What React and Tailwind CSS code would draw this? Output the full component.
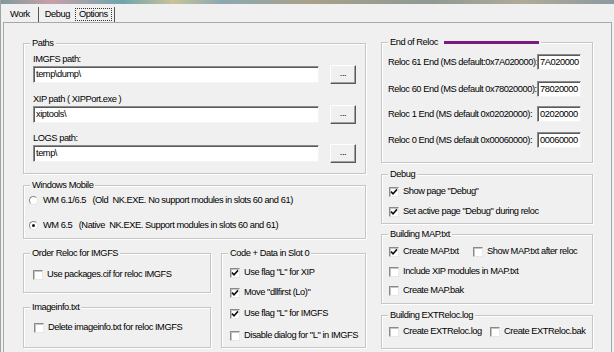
import React from "react";

const Check = ({ checked }) => (
  <span className="flex h-[10px] w-[10px] shrink-0 items-center justify-center border border-t-[#8a8a8a] border-l-[#8a8a8a] border-r-[#e8e8e8] border-b-[#e8e8e8] bg-white shadow-[inset_1px_1px_0_#c4c4c4]">
    {checked && (
      <svg width="8" height="8" viewBox="0 0 8 8">
        <path d="M1 3.6 L3 5.8 L7 1.4" fill="none" stroke="#111" strokeWidth="1.6" />
      </svg>
    )}
  </span>
);

const CheckRow = ({ checked, label, className = "" }) => (
  <div className={`flex h-[13px] items-center ${className}`}>
    <Check checked={checked} />
    <span className="ml-[4px] whitespace-pre">{label}</span>
  </div>
);

const Radio = ({ checked }) => (
  <span className="flex h-[9px] w-[9px] shrink-0 items-center justify-center rounded-full border border-t-[#8a8a8a] border-l-[#8a8a8a] border-r-[#e6e6e6] border-b-[#e6e6e6] bg-white">
    {checked && <span className="h-[3px] w-[3px] rounded-full bg-[#111]" />}
  </span>
);

const Group = ({ label, bar, className = "", children }) => (
  <div className={`relative border border-[#c6c6c6] shadow-[inset_1px_1px_0_#ffffff,1px_1px_0_#ffffff] ${className}`}>
    <div className="absolute -top-[7px] left-[6px] flex h-[13px] items-center bg-[#f0f0f0] px-[2px]">
      <span className="whitespace-pre">{label}</span>
      {bar && <span className="ml-[6px] h-[3px] w-[95px] bg-[#7c1b7e]" />}
    </div>
    {children}
  </div>
);

const Field = ({ value, className = "" }) => (
  <div className={`flex items-center border border-t-[#8c8c8c] border-l-[#8c8c8c] border-r-[#f4f4f4] border-b-[#f4f4f4] bg-white pl-[2px] shadow-[inset_1px_1px_0_#5a5a5a] ${className}`}>
    {value}
  </div>
);

const Browse = () => (
  <div className="ml-[11px] flex h-[19px] w-[26px] items-center justify-center border border-t-white border-l-white border-r-[#5a5a5a] border-b-[#5a5a5a] bg-[#f0f0f0] pb-[3px] shadow-[inset_-1px_-1px_0_#a0a0a0]">
    ...
  </div>
);

const PathBlock = ({ label, value, className = "" }) => (
  <div className={className}>
    <div className="h-[14px] leading-[14px]">{label}</div>
    <div className="flex h-[17px] items-center">
      <Field value={value} className="h-[17px] w-[286px]" />
      <Browse />
    </div>
  </div>
);

const RelocRow = ({ label, value, className = "" }) => (
  <div className={`flex h-[16px] items-center ${className}`}>
    <span className="w-[149px] whitespace-pre">{label}</span>
    <Field value={value} className="h-[16px] w-[44px]" />
  </div>
);

export default function App() {
  return (
    <div className="flex h-[352px] w-[614px] flex-col overflow-hidden border-l border-[#9aa5a8] bg-[#f0f0f0] font-['Liberation_Sans',Arial,sans-serif] text-[9.3px] leading-[13px] tracking-[-0.45px] text-black">
      <div className="h-[4px] shrink-0 bg-[linear-gradient(90deg,#7f9a9c_0%,#c8a0a8_8%,#6fa5ad_20%,#c9c29a_28%,#8aa9b0_36%,#a8a08a_50%,#8f9a94_70%,#b0aa98_85%,#8c9aa0_100%)]" />

      <div className="flex h-[18px] shrink-0 items-center pl-[9px] pt-[3px]">
        <span>Work</span>
        <span className="ml-[8px] h-[15px] w-px bg-[#555]" />
        <span className="ml-[6px]">Debug</span>
        <span className="ml-[5px] border border-dotted border-[#333] px-[3px] leading-[11px]">Options</span>
        <span className="ml-[2px] h-[15px] w-px bg-[#555]" />
      </div>

      <div className="mr-[2px] ml-[2px] flex flex-1 border-t border-r border-l border-[#a8a8a8] pt-[20px] pl-[19px]">
        <div className="flex w-[343px] flex-col">
          <Group label="Paths" className="h-[131px] pt-[8px] pl-[9px]">
            <PathBlock label="IMGFS path:" value="temp\dump\" />
            <PathBlock label="XIP path  ( XIPPort.exe )" value="xiptools\" className="mt-[9px]" />
            <PathBlock label="LOGS path:" value="temp\" className="mt-[8px]" />
          </Group>

          <Group label="Windows Mobile" className="mt-[11px] h-[54px] pt-[8px] pl-[5px]">
            <div className="flex h-[13px] items-center">
              <Radio />
              <span className="ml-[5px] whitespace-pre">WM 6.1/6.5   (Old  NK.EXE. No support modules in slots 60 and 61)</span>
            </div>
            <div className="mt-[12px] flex h-[13px] items-center">
              <Radio checked />
              <span className="ml-[5px] whitespace-pre">WM 6.5   (Native  NK.EXE. Support modules in slots 60 and 61)</span>
            </div>
          </Group>

          <div className="mt-[14px] flex">
            <div className="flex w-[188px] flex-col">
              <Group label="Order Reloc for IMGFS" className="h-[40px] pt-[14px] pl-[9px]">
                <CheckRow label="Use packages.cif for reloc IMGFS" />
              </Group>
              <Group label="Imageinfo.txt" className="mt-[14px] h-[41px] pt-[13px] pl-[10px]">
                <CheckRow label="Delete imageinfo.txt for reloc IMGFS" />
              </Group>
            </div>
            <Group label="Code + Data in Slot 0" className="ml-[10px] h-[95px] w-[145px] pt-[12px] pl-[8px]">
              <CheckRow checked label={'Use flag "L" for XIP'} />
              <CheckRow checked label={'Move "dllfirst (Lo)"'} className="mt-[7px]" />
              <CheckRow checked label={'Use flag "L" for IMGFS'} className="mt-[8px]" />
              <CheckRow label={'Disable dialog for "L" in IMGFS'} className="mt-[9px]" />
            </Group>
          </div>
        </div>

        <div className="ml-[15px] -mt-[1px] flex w-[212px] flex-col">
          <Group label="End of Reloc" bar className="h-[121px] pt-[11px] pl-[6px]">
            <RelocRow label="Reloc 61 End (MS default:0x7A020000):" value="7A020000" />
            <RelocRow label="Reloc 60 End (MS default 0x78020000):" value="78020000" className="mt-[11px]" />
            <RelocRow label="Reloc 1 End (MS default 0x02020000):" value="02020000" className="mt-[9px]" />
            <RelocRow label="Reloc 0 End (MS default 0x00060000):" value="00060000" className="mt-[10px]" />
          </Group>

          <Group label="Debug" className="mt-[11px] h-[50px] pt-[10px] pl-[7px]">
            <CheckRow checked label={'Show page "Debug"'} />
            <CheckRow checked label={'Set active page "Debug" during reloc'} className="mt-[7px]" />
          </Group>

          <Group label="Building MAP.txt" className="mt-[10px] h-[70px] pt-[10px] pl-[7px]">
            <div className="flex">
              <CheckRow checked label="Create MAP.txt" className="w-[84px]" />
              <CheckRow label="Show MAP.txt after reloc" />
            </div>
            <CheckRow label="Include XIP modules in MAP.txt" className="mt-[7px]" />
            <CheckRow label="Create MAP.bak" className="mt-[6px]" />
          </Group>

          <Group label="Building EXTReloc.log" className="mt-[11px] h-[34px] pt-[9px] pl-[7px]">
            <div className="flex">
              <CheckRow label="Create EXTReloc.log" className="w-[101px]" />
              <CheckRow label="Create EXTReloc.bak" />
            </div>
          </Group>
        </div>
      </div>
    </div>
  );
}
